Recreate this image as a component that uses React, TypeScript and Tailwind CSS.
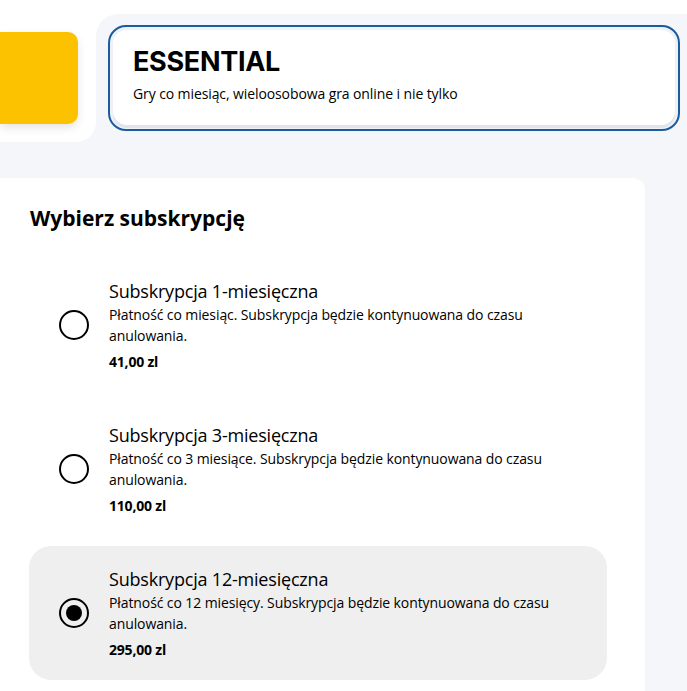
import React from "react";

type Plan = {
  id: string;
  title: string;
  desc: string;
  price: string;
};

const plans: Plan[] = [
  {
    id: "1m",
    title: "Subskrypcja 1-miesięczna",
    desc: "Płatność co miesiąc. Subskrypcja będzie kontynuowana do czasu anulowania.",
    price: "41,00 zl",
  },
  {
    id: "3m",
    title: "Subskrypcja 3-miesięczna",
    desc: "Płatność co 3 miesiące. Subskrypcja będzie kontynuowana do czasu anulowania.",
    price: "110,00 zl",
  },
  {
    id: "12m",
    title: "Subskrypcja 12-miesięczna",
    desc: "Płatność co 12 miesięcy. Subskrypcja będzie kontynuowana do czasu anulowania.",
    price: "295,00 zl",
  },
];

const Radio = ({ checked }: { checked: boolean }) => (
  <div className="flex h-[30px] w-[30px] shrink-0 items-center justify-center rounded-full border-2 border-black">
    {checked && <div className="h-[16px] w-[16px] rounded-full bg-black" />}
  </div>
);

const PlanOption = ({ plan, checked }: { plan: Plan; checked: boolean }) => (
  <div
    className={`flex h-[134px] items-center gap-[20px] rounded-[22px] pl-[30px] ${
      checked ? "bg-[#efefef]" : ""
    }`}
  >
    <Radio checked={checked} />
    <div className="w-[460px]">
      <p className="text-[18px] leading-[25px] tracking-[-0.2px]">{plan.title}</p>
      <p className="text-[14px] leading-[21px] tracking-[-0.1px]">{plan.desc}</p>
      <p className="mt-[6px] text-[14px] leading-[20px] font-bold tracking-[-0.2px]">{plan.price}</p>
    </div>
  </div>
);

export default function App() {
  return (
    <div className="min-h-screen overflow-hidden bg-[#f5f6fa] font-['Open_Sans',sans-serif] text-black">
      {/* TOP ROW */}
      <div className="flex h-[142px]">
        <div className="w-[96px] shrink-0 rounded-br-[20px] bg-white pt-[32px]">
          <div className="h-[92px] w-[78px] rounded-r-[10px] bg-[#fcc200] shadow-[0_4px_10px_rgba(0,0,0,0.10)]" />
        </div>
        <div className="flex-1 bg-white">
          <div className="mt-[14px] h-[128px] rounded-tl-[22px] bg-[#f5f6fa] pt-[11px] pr-[7px] pl-[12px]">
            <div className="h-[106px] rounded-[18px] border-2 border-[#1b5c9e] bg-[#eef1f6] p-[3px]">
              <div className="h-[95px] rounded-[14px] bg-white px-[20px] pt-[15px] shadow-[0_3px_0_#e1e4ea]">
                <h1 className="font-['Inter',sans-serif] text-[27px] leading-[34px] font-bold tracking-[-0.3px]">
                  ESSENTIAL
                </h1>
                <p className="mt-[6px] text-[14px] leading-[18px] tracking-[-0.1px]">
                  Gry co miesiąc, wieloosobowa gra online i nie tylko
                </p>
              </div>
            </div>
          </div>
        </div>
      </div>

      {/* SUBSCRIPTION PANEL */}
      <div className="mt-[36px] w-[645px] rounded-tr-[12px] bg-white pt-[27px] pl-[29px] pb-[20px]">
        <h2 className="pl-[1px] text-[21px] leading-[26px] font-bold">Wybierz subskrypcję</h2>
        <div className="mt-[27px] flex w-[578px] flex-col gap-[10px]">
          {plans.map((p) => (
            <PlanOption key={p.id} plan={p} checked={p.id === "12m"} />
          ))}
        </div>
      </div>
    </div>
  );
}
